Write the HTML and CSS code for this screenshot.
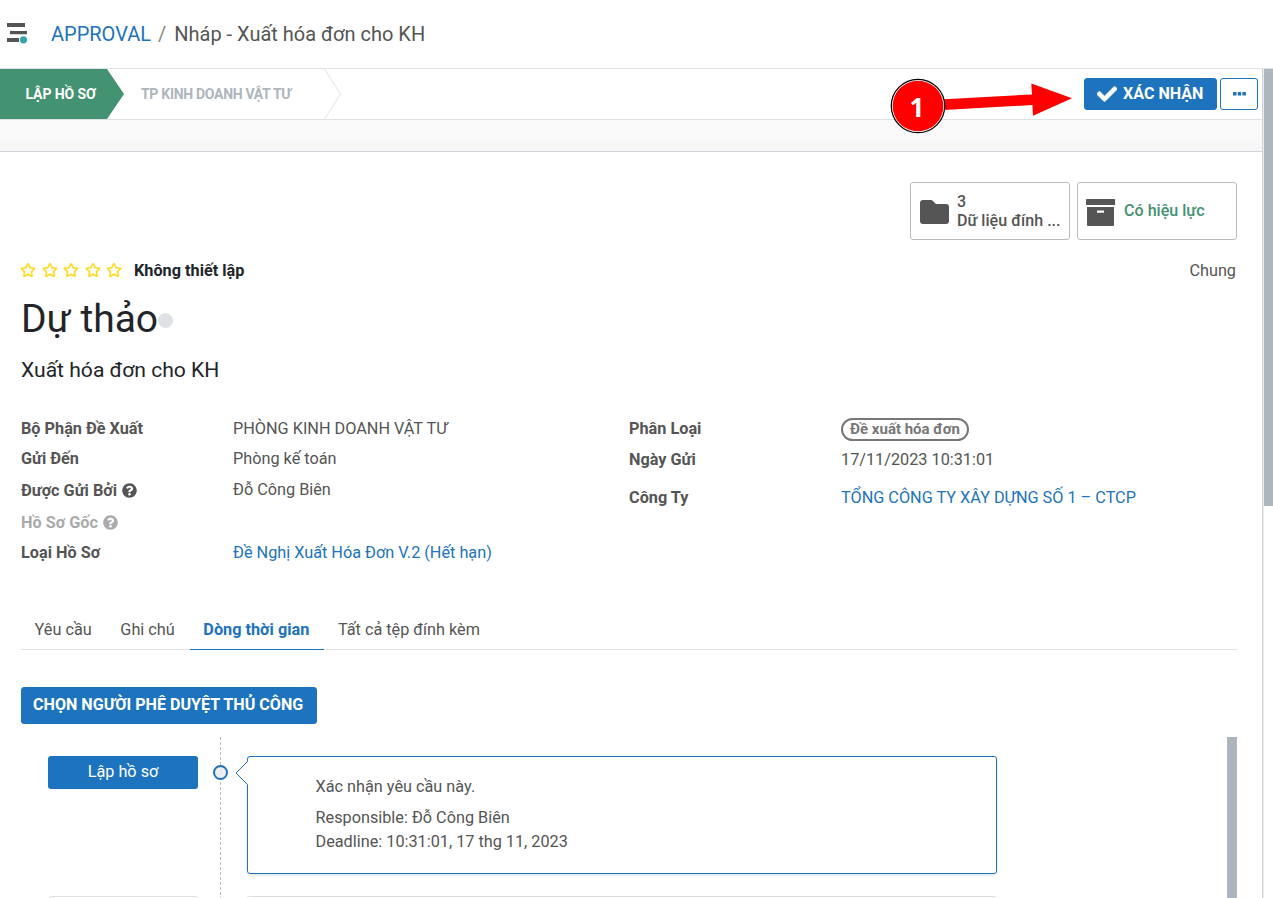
FILE: index.html
```html
<!DOCTYPE html>
<html lang="vi">
<head>
<meta charset="utf-8">
<title>Approval</title>
<link rel="stylesheet" href="styles.css">
</head>
<body>
<svg class="defs" width="0" height="0" aria-hidden="true">
  <symbol id="star" viewBox="0 0 576 512"><path fill="currentColor" stroke="currentColor" stroke-width="12" d="M528 171.500L382 150.200 316.700 17.800c-11.700-23.600-45.600-23.900-57.400 0L194 150.200 48 171.500c-26.200 3.800-36.700 36.100-17.700 54.600l105.700 103-25 145.500c-4.500 26.200 23.200 46 46.400 33.700L288 439.600l130.700 68.700c23.200 12.200 50.900-7.400 46.400-33.700l-25-145.500 105.700-103c19-18.500 8.500-50.800-17.800-54.600zM388.600 312.300l23.700 138.400L288 385.400l-124.300 65.300 23.700-138.400-100.600-98 139-20.200 62.200-126 62.200 126 139 20.200-100.600 98z"/></symbol>
  <symbol id="question" viewBox="0 0 512 512"><path fill="currentColor" d="M504 256c0 137-111 248-248 248S8 393 8 256 119 8 256 8s248 111 248 248zM262.700 90c-54.500 0-89.300 23-116.500 63.800-3.500 5.300-2.400 12.400 2.700 16.300l34.700 26.300c5.200 3.900 12.600 3 16.700-2.100 17.900-22.700 30.100-35.800 57.300-35.800 20.400 0 45.700 13.100 45.700 33 0 15-12.400 22.700-32.500 34C247 238.600 216 254.900 216 296v4c0 6.600 5.400 12 12 12h56c6.600 0 12-5.400 12-12v-1.300c0-28.500 83.200-29.600 83.200-106.700 0-58-60.200-102-116.500-102zM256 338c-25.400 0-46 20.600-46 46s20.600 46 46 46 46-20.600 46-46-20.600-46-46-46z"/></symbol>
</svg>
<header class="topbar">
  <svg class="menu-icon" width="22" height="22" viewBox="0 0 22 22"><path fill="#555" d="M1 1h18v4H1zM4 9h17v3.300H4zM1 16h12v4H1z"/><circle cx="17.500" cy="17.800" r="3.600" fill="#35a5ad"/></svg>
  <a class="crumb-link">APPROVAL</a><span class="crumb-sep">/</span><span class="crumb-current">Nháp - Xuất hóa đơn cho KH</span>
</header>
<div class="workspace">
  <main class="page">
    <div class="statusbar">
      <div class="stage active">LẬP HỒ SƠ</div>
      <svg class="tip" width="17" height="50" viewBox="0 0 17 50"><path fill="#439272" d="M0 0l17 25L0 50z"/></svg>
      <div class="stage next">TP KINH DOANH VẬT TƯ</div>
      <svg class="tip" width="17" height="50" viewBox="0 0 17 50"><path fill="none" stroke="#dee2e6" d="M.5 0l16 25-16 25"/></svg>
      <div class="actions">
        <button class="btn confirm"><svg width="20" height="20" viewBox="0 0 512 512"><path fill="currentColor" stroke="currentColor" stroke-width="20" d="M173.900 439.400l-166.400-166.400c-10-10-10-26.200 0-36.200l36.200-36.200c10-10 26.200-10 36.200 0L192 312.700 432.100 72.600c10-10 26.200-10 36.200 0l36.200 36.200c10 10 10 26.200 0 36.200l-294.400 294.400c-10 10-26.200 10-36.200 0z"/></svg><span>XÁC NHẬN</span></button>
        <button class="btn more" aria-label="More"><svg width="13" height="4" viewBox="0 0 13 4"><path fill="currentColor" d="M.500 0h2.500q.5 0 .5.500v2.500q0 .5-.5.500H.500q-.5 0-.5-.5V.500Q0 0 .500 0zM5.200 0h2.500q.5 0 .5.500v2.500q0 .5-.5.500H5.200q-.5 0-.5-.5V.500q0-.5.500-.5zM9.900 0h2.500q.5 0 .5.500v2.500q0 .5-.5.500H9.900q-.5 0-.5-.5V.500q0-.5.500-.5z"/></svg></button>
      </div>
      <div class="callout">
        <svg width="182" height="58" viewBox="0 0 182 58"><path fill="red" d="M54 22.300L142 17.500l-.7-11L182 21.300 143 38.800l-.6-10.800L54 33z"/><circle cx="28" cy="29" r="26.700" fill="#fff" stroke="#000" stroke-width="1.300"/><circle cx="28" cy="29" r="25.300" fill="red"/></svg>
        <span class="callout-number">1</span>
      </div>
    </div>
    <div class="gutter"></div>
    <section class="sheet">
      <div class="stats">
        <div class="stat"><svg width="30" height="26" viewBox="0 0 30 26"><path fill="#555" d="M3 0h8q1 0 2 1l3 3h10a3 3 0 0 1 3 3v14a3 3 0 0 1-3 3H3a3 3 0 0 1-3-3V3a3 3 0 0 1 3-3z"/></svg><div class="stat-text">3<br>Dữ liệu đính ...</div></div>
        <div class="stat valid"><svg width="30" height="27" viewBox="0 0 30 27"><path fill="#555" fill-rule="evenodd" d="M1 0h27.500q.6 0 .6.600V6H0V.600Q0 0 1 0zM1 8h27v18q0 1-1 1H2q-1 0-1-1zM11 11.500v2.300h7v-2.300z"/></svg><div class="stat-text">Có hiệu lực</div></div>
      </div>
      <div class="meta">
        <div class="stars"><svg><use href="#star"/></svg><svg><use href="#star"/></svg><svg><use href="#star"/></svg><svg><use href="#star"/></svg><svg><use href="#star"/></svg></div>
        <b>Không thiết lập</b><span class="scope">Chung</span>
      </div>
      <h1>Dự thảo<i class="dot"></i></h1>
      <h2>Xuất hóa đơn cho KH</h2>
      <div class="fields">
        <dl class="group">
          <dt>Bộ Phận Đề Xuất</dt><dd>PHÒNG KINH DOANH VẬT TƯ</dd>
          <dt>Gửi Đến</dt><dd>Phòng kế toán</dd>
          <dt>Được Gửi Bởi <svg><use href="#question"/></svg></dt><dd class="raised">Đỗ Công Biên</dd>
          <dt class="muted">Hồ Sơ Gốc <svg><use href="#question"/></svg></dt><dd></dd>
          <dt>Loại Hồ Sơ</dt><dd><a>Đề Nghị Xuất Hóa Đơn V.2 (Hết hạn)</a></dd>
        </dl>
        <dl class="group right">
          <dt>Phân Loại</dt><dd><span class="tag">Đề xuất hóa đơn</span></dd>
          <dt>Ngày Gửi</dt><dd>17/11/2023 10:31:01</dd>
          <dt>Công Ty</dt><dd><a>TỔNG CÔNG TY XÂY DỰNG SỐ 1 – CTCP</a></dd>
        </dl>
      </div>
      <nav class="tabs"><a>Yêu cầu</a><a>Ghi chú</a><a class="selected">Dòng thời gian</a><a>Tất cả tệp đính kèm</a></nav>
      <button class="btn choose">CHỌN NGƯỜI PHÊ DUYỆT THỦ CÔNG</button>
      <div class="timeline">
        <div class="step">
          <div class="step-name">Lập hồ sơ</div>
          <div class="rail"><i class="node"></i></div>
          <div class="card">
            <svg class="pointer" width="13" height="24" viewBox="0 0 13 24"><path fill="#fff" d="M13 0L1 12l12 12z"/><path fill="none" stroke="#1d73bd" d="M12.500.500L1 12l11.500 11.500"/></svg>
            <p class="request">Xác nhận yêu cầu này.</p>
            <p>Responsible: Đỗ Công Biên</p>
            <p>Deadline: 10:31:01, 17 thg 11, 2023</p>
          </div>
        </div>
        <div class="step upcoming"><div class="step-name"></div><div class="rail"></div><div class="card"></div></div>
        <div class="inner-scroll"></div>
      </div>
    </section>
  </main>
  <div class="scroll-track"><div class="scroll-thumb"></div></div>
</div>
</body>
</html>
```

FILE: styles.css
```css
* { box-sizing: border-box; }
body { margin: 0; height: 898px; overflow: hidden; background: #fff; color: #555; font: 16.250px/24px Roboto, sans-serif; }
.defs { position: absolute; }
a { color: #1d73bd; }
svg { flex: none; }
p, h1, h2, dl, dd { margin: 0; }
.topbar { display: flex; align-items: center; height: 69px; padding: 0 0 1px 6px; border-bottom: 1px solid #dee2e6; font-size: 20px; }
.menu-icon { margin: -2px 23px 0 0; }
.crumb-sep { margin: 0 8px 0 7px; color: #888; }
.workspace { display: flex; height: 829px; }
.page { flex: 1; min-width: 0; border-right: 1px solid #ced4da; }
.scroll-track { width: 10px; border-left: 1px solid #e9ecef; background: #fff; }
.scroll-thumb { height: 437px; background: #adb5bd; }
.statusbar { position: relative; display: flex; height: 51px; border-bottom: 1px solid #dee2e6; }
.stage { font-size: 14px; line-height: 50px; font-weight: 700; white-space: nowrap; }
.stage.active { width: 107px; padding-left: 25.500px; letter-spacing: -.1px; color: #fff; background: #439272; }
.stage.next { width: 200px; padding-left: 17px; letter-spacing: -.3px; color: #adb5bd; font-weight: 700; }
.actions { display: flex; gap: 3px; margin: 9px 4px 0 auto; }
.btn { display: flex; align-items: center; height: 32px; padding: 0; border: 1px solid #1d73bd; border-radius: 3px; background: #1d73bd; color: #fff; font: 700 16.100px/24px Roboto, sans-serif; white-space: nowrap; }
.confirm { width: 133px; gap: 6px; padding-left: 12px; }
.more { width: 38px; justify-content: center; background: #fff; color: #1d73bd; }
.callout { position: absolute; left: 890px; top: 8px; height: 58px; }
.callout-number { position: absolute; left: 17px; top: 15px; width: 20px; text-align: center; color: #fff; font: 700 26px/30px "Noto Sans", sans-serif; }
.gutter { height: 32px; background: linear-gradient(#f9f9f9 50%, #f5f5f5); border-bottom: 1px solid #ced4da; }
.sheet { padding: 30px 25px 0 21px; }
.stats { display: flex; justify-content: flex-end; gap: 7px; }
.stat { display: flex; align-items: center; width: 160px; height: 58px; padding: 2px 0 0 9px; gap: 7px; border: 1px solid #bbb; border-radius: 3px; font-size: 16.100px; font-weight: 500; line-height: 19px; white-space: nowrap; }
.stat svg { margin-top: 1px; }
.stat-text { margin-top: -3px; }
.stat.valid { padding-left: 8px; gap: 8px; color: #439272; }
.stat.valid svg { margin-top: 0; }
.meta { display: flex; align-items: center; height: 24px; margin-top: 18px; padding-top: 1px; color: #212529; }
.stars { display: flex; gap: 5.500px; width: 113px; margin: -1px 1px 0 -1px; color: #ffd91a; }
.stars svg { width: 16px; height: 14px; }
.scope { margin-left: auto; margin-right: 1px; color: #555; }
h1 { display: flex; align-items: center; height: 48px; margin-top: 13px; color: #212529; font-size: 39px; font-weight: 400; }
.dot { width: 15px; height: 15px; margin-top: 3px; border-radius: 50%; background: #dee2e6; }
h2 { margin-top: 14px; color: #212529; font-size: 21.100px; line-height: 26px; font-weight: 400; }
.fields { display: grid; grid-template-columns: 608px 608px; margin-top: 31px; }
.group { display: grid; grid-template-columns: 212px 1fr; grid-template-rows: 30px 30px 33px 31px 30px; align-items: center; align-content: start; white-space: nowrap; }
.group.right { grid-template-rows: 30px 32px 44px; }
dt { font-weight: 700; }
dt svg { width: 15px; height: 15px; margin-left: 1px; vertical-align: -2px; }
.muted { color: #aaa; }
.raised { padding-bottom: 2px; }
.tag { display: block; width: 128px; height: 23px; margin-top: 1px; border: 2px solid #777; border-radius: 12px; color: #777; font-size: 15px; line-height: 19px; font-weight: 700; text-align: center; }
.tabs { display: flex; height: 41px; margin-top: 41px; border-bottom: 1px solid #dee2e6; }
.tabs a { height: 41px; padding: 9px 15px 0 13.600px; color: #555; }
.tabs .selected { border-bottom: 1px solid #1d73bd; color: #1d73bd; font-weight: 700; }
.choose { width: 296px; height: 37px; margin-top: 37px; padding: 0 0 2px 11px; }
.timeline { position: relative; height: 162px; margin-top: 13px; overflow: hidden; }
.inner-scroll { position: absolute; right: 0; top: 0; width: 10px; height: 162px; background: #adb5bd; }
.step { display: grid; grid-template-columns: 150px 49px 750px; height: 140px; padding-left: 27px; }
.step-name { height: 33px; margin-top: 19px; border-radius: 3px; background: #1d73bd; color: #fff; line-height: 31px; text-align: center; }
.rail { padding: 28px 0 0 15px; background: repeating-linear-gradient(#bbb 0 3px, transparent 3px 5px) 22px 0 / 1px 100% no-repeat; }
.node { display: block; width: 15px; height: 15px; border: 2px solid #1d73bd; border-radius: 50%; background: #eee; }
.card { position: relative; height: 118px; margin-top: 19px; padding: 18px 0 0 67.500px; border: 1px solid #1d73bd; border-radius: 3px; box-shadow: 0 1px 3px #0002; }
.pointer { position: absolute; left: -13px; top: 4px; }
.request { margin-bottom: 7px; }
.upcoming .step-name { border: 1px solid #dee2e6; background: #fff; }
.upcoming .card { border-color: #ddd; box-shadow: none; }
```
